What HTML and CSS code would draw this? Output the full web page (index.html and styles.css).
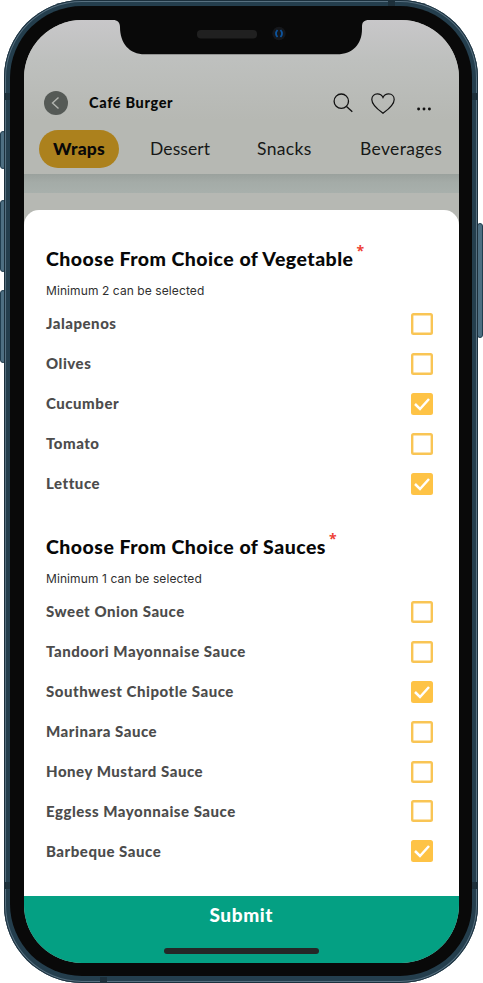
FILE: index.html
```html
<!DOCTYPE html>
<html lang="en">
<head>
<meta charset="utf-8">
<title>Café Burger</title>
<link rel="stylesheet" href="styles.css">
</head>
<body>
<div class="device">
  <i class="button mute"></i><i class="button up"></i><i class="button down"></i><i class="button power"></i>
  <i class="antenna a1"></i><i class="antenna a2"></i><i class="antenna a3"></i><i class="antenna a4"></i><i class="antenna a5"></i><i class="antenna a6"></i>
  <div class="bezel">
    <div class="screen">
      <header class="top">
        <div class="titlebar">
          <svg class="back" viewBox="0 0 24 24"><circle cx="12" cy="12" r="12"/><path d="M14.500 6.500 8.500 12l6 5.500"/></svg>
          <h1>Café Burger</h1>
          <svg class="search" viewBox="0 0 20 20"><circle cx="8.300" cy="8.200" r="7.200"/><path d="m13.500 13.500 5.800 5.300"/></svg>
          <svg class="heart" viewBox="0 0 24 21"><path d="M12 20.200C8.500 17.600.8 12.500.8 6.500.8 3 3.400.9 6.300.9 8.800.9 11 2.300 12 4.500 13 2.300 15.200.9 17.700.9c2.900 0 5.500 2.100 5.500 5.600 0 6-7.700 11.100-11.200 13.700Z"/></svg>
          <svg class="more" viewBox="0 0 14 4"><circle cx="1.600" cy="2" r="1.450"/><circle cx="7" cy="2" r="1.450"/><circle cx="12.400" cy="2" r="1.450"/></svg>
        </div>
        <nav class="tabs">
          <span class="tab active">Wraps</span><span class="tab dessert">Dessert</span><span class="tab snacks">Snacks</span><span class="tab beverages">Beverages</span>
        </nav>
      </header>
      <div class="band"></div>
      <main class="sheet">
        <section class="group">
          <h2>Choose From Choice of Vegetable<b class="req">*</b></h2>
          <p>Minimum 2 can be selected</p>
          <ul>
            <li><span>Jalapenos</span><i class="box"></i></li>
            <li><span>Olives</span><i class="box"></i></li>
            <li><span>Cucumber</span><i class="box on"><svg viewBox="0 0 22 22"><path d="m4 11 5 5 9-10"/></svg></i></li>
            <li><span>Tomato</span><i class="box"></i></li>
            <li><span>Lettuce</span><i class="box on"><svg viewBox="0 0 22 22"><path d="m4 11 5 5 9-10"/></svg></i></li>
          </ul>
        </section>
        <section class="group">
          <h2>Choose From Choice of Sauces<b class="req">*</b></h2>
          <p>Minimum 1 can be selected</p>
          <ul>
            <li><span>Sweet Onion Sauce</span><i class="box"></i></li>
            <li><span>Tandoori Mayonnaise Sauce</span><i class="box"></i></li>
            <li><span>Southwest Chipotle Sauce</span><i class="box on"><svg viewBox="0 0 22 22"><path d="m4 11 5 5 9-10"/></svg></i></li>
            <li><span>Marinara Sauce</span><i class="box"></i></li>
            <li><span>Honey Mustard Sauce</span><i class="box"></i></li>
            <li><span>Eggless Mayonnaise Sauce</span><i class="box"></i></li>
            <li><span>Barbeque Sauce</span><i class="box on"><svg viewBox="0 0 22 22"><path d="m4 11 5 5 9-10"/></svg></i></li>
          </ul>
        </section>
      </main>
      <footer class="submit"><span>Submit</span><i class="home"></i></footer>
    </div>
    <svg class="notch" viewBox="110 18 264 40">
      <path class="cut" d="M112 18v2h1c4.500 0 7 2.500 7 7 0 16 9 27.300 25 27.300h192c16 0 25-10.300 25-25.300v-2c0-5 2-7 7-7h1v-2Z"/>
      <rect class="speaker" x="197" y="30" width="60" height="8.500" rx="4"/>
      <circle class="lens" cx="279" cy="33.500" r="6.700"/>
      <path class="glint" d="M277.500 30q-3 3.500 0 7M280.500 30q3 3.500 0 7"/>
    </svg>
  </div>
</div>
</body>
</html>
```
FILE: styles.css
```css
* { box-sizing: border-box; }
body { margin: 0; width: 483px; height: 983px; overflow: hidden; background: #fff; font-family: Lato, "Liberation Sans", sans-serif; }
h1, h2, p, ul { margin: 0; padding: 0; }
.device { position: relative; width: 474px; height: 983px; margin-left: 4px; padding: 6px 6px 7px; border-radius: 78px; background: #243e4d; box-shadow: inset 0 0 0 1px #1b303d, inset 0 0 0 2px #577080; }
.bezel { position: relative; height: 970px; padding: 14px; border-radius: 72px; background: #090909; }
.screen { height: 943px; width: 434.5px; overflow: hidden; border-radius: 58px; background: #b6b8b3; display: flex; flex-direction: column; }

.button { position: absolute; z-index: -1; width: 6px; background: #4e6f82; border: 1px solid #203d4e; border-radius: 3px; }
.mute { left: -4px; top: 131px; height: 38px; }
.up { left: -4px; top: 200px; height: 72px; }
.down { left: -4px; top: 290px; height: 73px; }
.power { right: -5px; top: 223px; height: 115px; }
.antenna { position: absolute; background: #1d303b; }
.a1, .a2, .a3, .a4 { width: 6px; height: 7px; }
.a1 { left: 0; top: 93px; }
.a2 { right: 0; top: 93px; }
.a3 { left: 0; top: 882px; }
.a4 { right: 0; top: 882px; }
.a5, .a6 { width: 7px; height: 6px; }
.a5 { left: 384px; top: 0; }
.a6 { left: 96px; bottom: 0; }

.notch { position: absolute; left: 100px; top: 12px; width: 264px; height: 40px; }
.cut { fill: #090909; }
.speaker { fill: #202020; }
.lens { fill: #15171b; }
.glint { fill: none; stroke: #0d549d; stroke-width: 1.7; }

.top { height: 154px; flex: none; padding-top: 68px; background: linear-gradient(#c8c7c9 0, #bec0be 40px, #b6b8b3 100px); }
.titlebar { display: flex; align-items: center; height: 30px; padding-left: 20px; }
.back { width: 24px; height: 24px; fill: #555a56; }
.back path { fill: none; stroke: #b3b5b0; stroke-width: 1.4; }
h1 { width: 244px; margin-left: 21px; font-size: 14.5px; line-height: 18px; padding-bottom: 1px; font-weight: 900; color: #080908; letter-spacing: .65px; }
.search { width: 20px; height: 20px; fill: none; stroke: #111; stroke-width: 1.3; }
.heart { width: 24px; height: 21px; margin-left: 18px; fill: none; stroke: #111; stroke-width: 1.2; }
.more { width: 14px; height: 4px; margin: 12px 0 0 22px; fill: #111; }
.tabs { display: flex; align-items: center; height: 38px; margin-top: 12px; padding-left: 15px; font-size: 17.5px; line-height: 38px; letter-spacing: .35px; color: #171817; white-space: nowrap; }
.active { width: 80px; text-align: center; border-radius: 19px; background: #ac811d; font-weight: 900; letter-spacing: .2px; color: #080808; }
.dessert { width: 107px; margin-left: 31px; letter-spacing: .1px; }
.snacks { width: 103px; }
.band { height: 19px; flex: none; margin-bottom: 17px; background: linear-gradient(#9aa19d, #a4aba7 8px, #a8b0ac); }

.sheet { flex: 1; padding: 35px 26px 0 22px; border-radius: 15px 15px 0 0; background: #fff; }
.group { height: 288px; }
h2 { height: 28px; font-size: 19.5px; line-height: 28px; font-weight: 900; letter-spacing: .47px; color: #080808; white-space: nowrap; }
.req { position: relative; top: -10px; margin-left: 3px; font: bold 14px/1 "Open Sans", sans-serif; color: #ee4136; }
.group p { height: 15px; margin-top: 10px; font: 12px/15px Inter, sans-serif; letter-spacing: .09px; color: #303030; }
.group ul { margin-top: 6px; list-style: none; }
li { display: flex; align-items: center; justify-content: space-between; height: 39.9px; font-size: 15px; font-weight: 900; letter-spacing: .52px; color: #4c4c4c; }
li span { padding-bottom: 1.5px; }
.box { display: block; width: 22px; height: 22px; box-shadow: inset 0 0 0 2.4px #f9c555; border-radius: 2.5px; }
.on { box-shadow: none; background: #fec346; }
.on svg { display: block; fill: none; stroke: #fff; stroke-width: 2.5; }

.submit { display: flex; flex-direction: column; align-items: center; height: 67px; flex: none; background: #04a083; color: #fff; font-size: 19px; line-height: 38px; font-weight: 900; letter-spacing: .6px; }
.home { width: 155px; height: 6px; margin-top: 14px; border-radius: 3px; background: #242827; }
```
